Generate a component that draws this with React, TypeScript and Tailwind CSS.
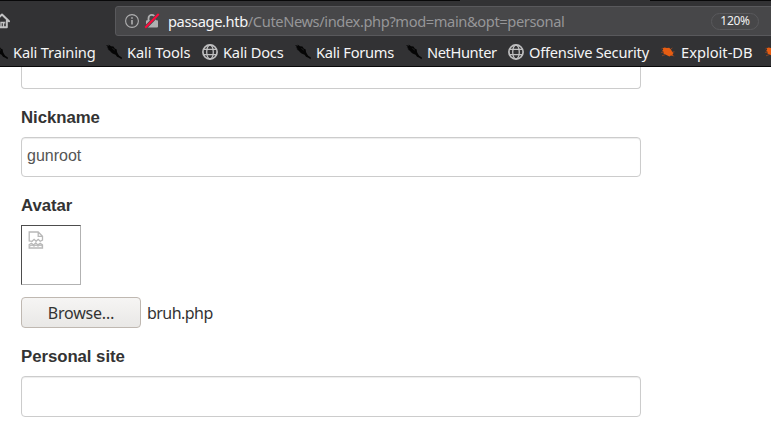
import React from "react";

const chromeFont = "font-['Noto_Sans',sans-serif]";
const pageFont = "font-['Liberation_Sans',Arial,sans-serif]";

function KaliIcon() {
  return (
    <svg viewBox="0 0 16 16" className="h-4 w-4 shrink-0">
      <path
        d="M0 1 3 1.8 2.6.6 5 2.2 7.4 2.6 8.8 4.4 10.7 5.4 11 8 12 10 13.2 11.8 15.9 13.6 15.6 15.2 13.3 13.7 11 12.8 9.6 10.7 6.6 9.4 5 8.2 3.9 6.8 1.6 5.4 3 5.2.7 3.4 2.3 3.4Z"
        fill="#050505"
      />
      <path d="M6.4 4.4 8.9 6.2" stroke="#323234" strokeWidth=".6" />
    </svg>
  );
}

function GlobeIcon() {
  return (
    <svg viewBox="0 0 16 16" className="h-4 w-4 shrink-0" fill="none" stroke="#bebebf">
      <circle cx="8" cy="8" r="7.1" strokeWidth="1.7" />
      <ellipse cx="8" cy="8" rx="3.3" ry="7" strokeWidth="1.3" />
      <path d="M1.8 5.3h12.4M1.8 10.6h12.4" strokeWidth="1.3" />
    </svg>
  );
}

function BugIcon() {
  return (
    <svg viewBox="0 0 16 16" className="h-4 w-4 shrink-0">
      <path
        d="M2.6 4.2 4.6 3.6 7 4 9.2 3.8 11 5.4 12 7.4 13.6 9 12.6 10.2 13 12 11 11.4 9.4 12.4 7.4 11.4 5.4 10.6 3.4 9.4 3.6 7.8 2 7 3.2 5.8Z"
        fill="#e75d12"
      />
      <path
        d="M1 8.3h2.4M2 11.8l3.3-1.2M11 4.8l1.4-.8M12.5 8l2-.2M12.7 11.4l1.5.8M2.6 4.2 1.4 5"
        stroke="#a84b20"
        strokeWidth=".7"
      />
    </svg>
  );
}

const bookmarks = [
  { label: "Kali Training", kind: "kali", size: "w-[114px]", spacing: "tracking-[-0.17px]" },
  { label: "Kali Tools", kind: "kali", size: "w-24", spacing: "tracking-[-0.1px]" },
  { label: "Kali Docs", kind: "globe", size: "w-[93px]", spacing: "tracking-[-0.2px]" },
  { label: "Kali Forums", kind: "kali", size: "w-[111px]", spacing: "tracking-[-0.27px]" },
  { label: "NetHunter", kind: "kali", size: "w-[102px]", spacing: "tracking-[-0.4px]" },
  { label: "Offensive Security", kind: "globe", size: "w-[152px]", spacing: "tracking-[-0.24px]" },
  { label: "Exploit-DB", kind: "bug", size: "w-[104px]", spacing: "tracking-normal" },
  { label: "", kind: "bug", size: "w-4", spacing: "tracking-normal" },
];

function Toolbar() {
  return (
    <header className={`h-[67px] overflow-hidden border-b border-[#080809] bg-[#323234] ${chromeFont}`}>
      <div className="flex h-px justify-between">
        <div className="w-[460px] bg-[#080809]" />
        <div className="w-[121px] bg-[#080809]" />
      </div>
      <div className="flex h-[35px] pt-[5px]">
        <div className="w-[115px] shrink-0 pt-[7px]">
          <svg viewBox="0 0 16 16" className="-ml-1.5 h-4 w-4" fill="none" stroke="#c3c3c4">
            <path d="m1 8.3 7-6.8 7 6.8M3.2 7.7v6.5h9.6V7.7" strokeWidth="2" strokeLinejoin="round" strokeLinecap="round" />
            <path d="M7 14V9.5h2.5V14" strokeWidth="1.4" />
            <path d="M10.7 8.8v1.7" strokeWidth="1.2" />
          </svg>
        </div>
        <div className="flex h-[30px] w-[680px] shrink-0 items-center rounded-[3px] border border-[#59595c] bg-[#474749] pl-[9px]">
          <svg viewBox="0 0 14 14" className="h-3.5 w-3.5 shrink-0" fill="none" stroke="#b0b0b1">
            <circle cx="7" cy="7" r="6.4" strokeWidth="1.1" />
            <path d="M7 6v4.5M7 3.3v1.5" strokeWidth="1.6" />
          </svg>
          <svg viewBox="0 0 16 16" className="ml-[5px] h-4 w-4 shrink-0" fill="none">
            <path d="M4.5 8V5.2a3.3 3.3 0 0 1 6.6 0V8" stroke="#b0b0b1" strokeWidth="1.8" />
            <rect x="2" y="7.2" width="12" height="7.4" rx="1" fill="#b0b0b1" />
            <path d="M1.2 14.8 14.7 1" stroke="#474749" strokeWidth="3.4" />
            <path d="M1.2 14.8 14.7 1" stroke="#ff0a3c" strokeWidth="2" />
          </svg>
          <div className="ml-2 w-[543px] whitespace-pre text-[14.67px] leading-5 tracking-[-0.39px] text-[#969698]">
            <span className="text-[#f5f5f6]">passage.htb</span>/CuteNews/index.php?mod=main&amp;opt=personal
          </div>
          <div className="flex h-[17px] w-12 shrink-0 items-center justify-center rounded-full border border-[#59595c] text-[12px] tracking-[-0.3px] text-[#f0f0f1]">
            120%
          </div>
        </div>
      </div>
      <nav className="-ml-2 flex h-[30px] w-[800px] items-center pt-px">
        {bookmarks.map((b, i) => (
          <div key={i} className={`flex shrink-0 items-center ${b.size}`}>
            {b.kind === "kali" ? <KaliIcon /> : b.kind === "globe" ? <GlobeIcon /> : <BugIcon />}
            <span className={`ml-[5px] whitespace-nowrap text-[14.67px] leading-5 text-[#f5f5f6] ${b.spacing}`}>{b.label}</span>
          </div>
        ))}
      </nav>
    </header>
  );
}

function Label({ children }: { children: React.ReactNode }) {
  return <div className="h-5 text-[16.8px] font-bold leading-[22px] tracking-[-0.05px]">{children}</div>;
}

export default function App() {
  return (
    <div className={`h-[434px] w-[771px] overflow-hidden bg-white text-[#333333] ${pageFont}`}>
      <Toolbar />
      <main className="pl-[21px]">
        <div className="h-[22px] w-[620px] rounded-b-[4px] border border-t-0 border-[#cccccc]" />
        <div className="mt-[18px]">
          <Label>Nickname</Label>
          <div className="mt-2.5 h-10 w-[620px] rounded-[4px] border border-[#cccccc] px-[5px] pt-2 text-[16px] leading-5 text-[#555555] shadow-[inset_0_1px_1px_rgba(0,0,0,0.075)]">
            gunroot
          </div>
        </div>
        <div className="mt-[18px]">
          <Label>Avatar</Label>
          <div className="mt-2.5 h-[60px] w-[60px] border border-b-[#b2b2b2] border-l-[#4d4d4d] border-r-[#b2b2b2] border-t-[#4d4d4d] pl-1.5 pt-[5px]">
            <svg viewBox="0 0 16 18" className="h-[18px] w-4" fill="none" stroke="#b8b8b8" strokeWidth="1.3">
              <path d="M1.2 10V1h9l4.3 4.3V9l-2.3 1.3-2-2-2.1 2-2-2-2 2ZM10.2 1v4.3h4.3M1.2 17v-3.3l2.3-1.5 2 1.7 2.3-2 2.1 2 2.3-1.5 2.3 1.5V17Z" />
              <path d="m2 15 2-1 2 1 2-1 2 1 2-1 2 1" />
            </svg>
          </div>
          <div className={`mt-3 flex items-center text-[16px] ${chromeFont}`}>
            <div className="flex h-[31px] w-[120px] items-center justify-center rounded-[4px] border border-[#bfb8b1] bg-gradient-to-b from-[#f6f5f4] to-[#e9e8e6] tracking-[-0.2px]">
              Browse…
            </div>
            <span className="ml-1.5 tracking-[-0.55px]">bruh.php</span>
          </div>
        </div>
        <div className="mt-[18px]">
          <Label>Personal site</Label>
          <div className="mt-2.5 h-[41px] w-[620px] rounded-[4px] border border-[#cccccc] shadow-[inset_0_1px_1px_rgba(0,0,0,0.075)]" />
        </div>
      </main>
    </div>
  );
}
